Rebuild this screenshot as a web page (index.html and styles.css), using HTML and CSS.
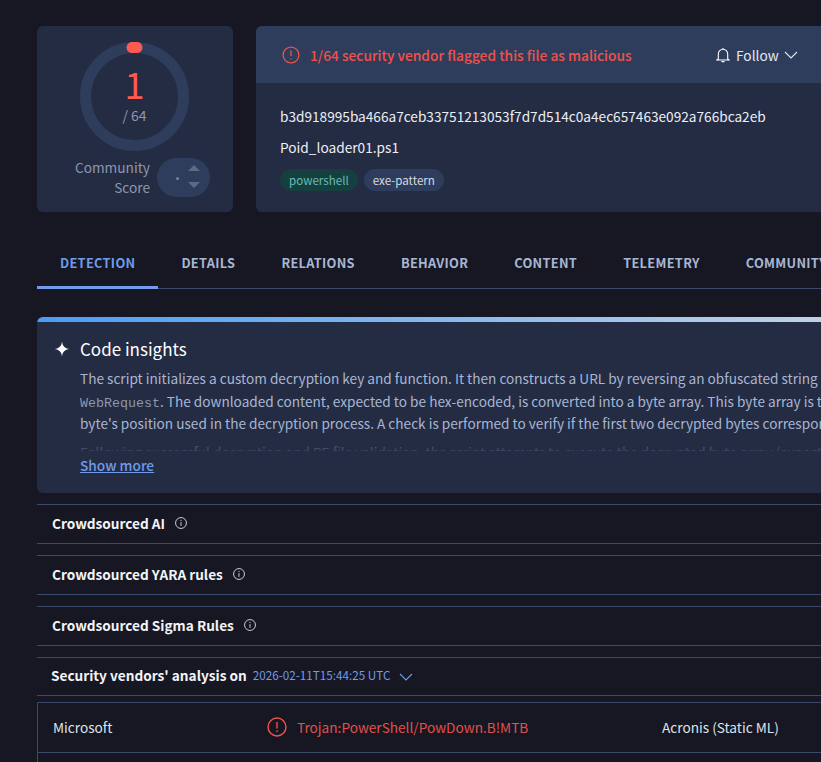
FILE: index.html
```html
<!DOCTYPE html>
<html lang="en">
<head>
<meta charset="utf-8">
<title>VirusTotal file report</title>
<link rel="stylesheet" href="styles.css">
</head>
<body>
<main class="page">
  <section class="top">
    <div class="score-card">
      <div class="ring">
        <svg class="ring-svg" width="109" height="109" viewBox="0 0 109 109">
          <circle cx="54.5" cy="54.5" r="49" fill="none" stroke="#2e3d5c" stroke-width="11"/>
          <path d="M52 5.6 Q54.5 5.4 57 5.6" fill="none" stroke="#ff5a50" stroke-width="11" stroke-linecap="round"/>
        </svg>
        <div class="ring-text"><div class="num">1</div><div class="den">/ 64</div></div>
      </div>
      <div class="community">
        <div class="community-label">Community<br>Score</div>
        <div class="vote">
          <span class="vote-dot"></span>
          <svg class="vote-arrows" width="14" height="26" viewBox="0 0 14 26"><path d="M7 0 L13 6 H1 Z M1 17 H13 L7 23 Z" fill="#5d6a84"/></svg>
        </div>
      </div>
    </div>
    <div class="info-card">
      <div class="info-head">
        <svg class="alert-icon" width="18" height="18" viewBox="0 0 18 18" fill="none" stroke="#f0524a" stroke-width="1.3"><circle cx="9" cy="9" r="7.9"/><path d="M9 4.6V10M9 12.4V13.4"/></svg>
        <span class="alert-text">1/64 security vendor flagged this file as malicious</span>
        <div class="follow">
          <svg width="14" height="16" viewBox="0 0 14 16" fill="none" stroke="#fff" stroke-width="1.1"><path d="M2.3 12V7a4.7 4.7 0 0 1 9.4 0v5l1.3 1H1Z M5.5 14.6h3"/><path d="M7 1v1.2"/></svg>
          <span>Follow</span>
          <svg class="follow-chevron" width="14" height="8" viewBox="0 0 14 8" fill="none" stroke="#dfe4ee" stroke-width="1.1"><path d="M1 1l6 6 6-6"/></svg>
        </div>
      </div>
      <div class="info-body">
        <div class="hash">b3d918995ba466a7ceb33751213053f7d7d514c0a4ec657463e092a766bca2eb</div>
        <div class="filename">Poid_loader01.ps1</div>
        <div class="tags"><span class="tag tag-green">powershell</span><span class="tag">exe-pattern</span></div>
      </div>
    </div>
  </section>

  <nav class="tabs">
    <a class="tab active">DETECTION</a>
    <a class="tab">DETAILS</a>
    <a class="tab">RELATIONS</a>
    <a class="tab">BEHAVIOR</a>
    <a class="tab">CONTENT</a>
    <a class="tab">TELEMETRY</a>
    <a class="tab">COMMUNITY</a>
  </nav>

  <section class="insights">
    <div class="insights-title">
      <svg width="16" height="16" viewBox="0 0 16 16"><path d="M8 0.5 C8.7 5.4 10.6 7.3 15.5 8 C10.6 8.7 8.7 10.6 8 15.5 C7.3 10.6 5.4 8.7 0.5 8 C5.4 7.3 7.3 5.4 8 0.5Z" fill="#fff"/></svg>
      <span>Code insights</span>
    </div>
    <div class="insights-body">
      <p>The script initializes a custom decryption key and function. It then constructs a URL by reversing an obfuscated string and downloads content from it using Invoke-</p>
      <p><code>WebRequest</code>. The downloaded content, expected to be hex-encoded, is converted into a byte array. This byte array is then decrypted using the key and each</p>
      <p>byte's position used in the decryption process. A check is performed to verify if the first two decrypted bytes correspond to the PE file header signature.</p>
      <p class="gap">Following successful decryption and PE file validation, the script attempts to execute the decrypted byte array (expected to be a .NET assembly)</p>
    </div>
    <a class="show-more">Show more</a>
  </section>

  <section class="rows">
    <div class="row">Crowdsourced AI <svg class="info" width="12" height="12" viewBox="0 0 13 13" fill="none" stroke="#d5d9e2" stroke-width="1"><circle cx="6.5" cy="6.5" r="5.9"/><path d="M6.5 5.6V9.6M6.5 3.2V4.4"/></svg></div>
    <div class="row">Crowdsourced YARA rules <svg class="info" width="12" height="12" viewBox="0 0 13 13" fill="none" stroke="#d5d9e2" stroke-width="1"><circle cx="6.5" cy="6.5" r="5.9"/><path d="M6.5 5.6V9.6M6.5 3.2V4.4"/></svg></div>
    <div class="row">Crowdsourced Sigma Rules <svg class="info" width="12" height="12" viewBox="0 0 13 13" fill="none" stroke="#d5d9e2" stroke-width="1"><circle cx="6.5" cy="6.5" r="5.9"/><path d="M6.5 5.6V9.6M6.5 3.2V4.4"/></svg></div>
    <div class="row vendors-head">
      <span>Security vendors' analysis on</span>
      <span class="date">2026-02-11T15:44:25 UTC</span>
      <svg width="14" height="8" viewBox="0 0 14 8" fill="none" stroke="#6f9bea" stroke-width="1.1"><path d="M1 1l6 6 6-6"/></svg>
    </div>
  </section>

  <section class="vendors">
    <div class="vendor-row">
      <div class="vendor-name">Microsoft</div>
      <div class="vendor-result">
        <svg width="20" height="20" viewBox="0 0 20 20" fill="none" stroke="#f0524a" stroke-width="1.4"><circle cx="10" cy="10" r="9"/><path d="M10 5V11.4M10 13.6V15"/></svg>
        <span>Trojan:PowerShell/PowDown.B!MTB</span>
      </div>
      <div class="vendor-name second">Acronis (Static ML)</div>
    </div>
    <div class="vendor-row"></div>
  </section>
</main>
</body>
</html>
```
FILE: styles.css
```css
* { box-sizing: border-box; }
html, body { margin: 0; height: 762px; overflow: hidden; background: #161723; }
body { width: 821px; font-family: "Noto Sans CJK SC", "Noto Sans CJK JP", "Liberation Sans", sans-serif; color: #fff; }
.page { width: 1100px; padding: 26px 0 0 37px; }

.top { display: flex; gap: 23px; }
.score-card { width: 196px; height: 186px; background: #242c44; border-radius: 6px; padding-top: 16px; display: flex; flex-direction: column; align-items: center; }
.ring { position: relative; width: 109px; height: 109px; margin-left: -1px; }
.ring-svg { display: block; }
.ring-text { position: absolute; inset: 0; display: flex; flex-direction: column; align-items: center; }
.num { font-size: 36px; line-height: 40px; margin-top: 21px; color: #ff5a50; }
.den { font-size: 14px; line-height: 20px; margin-top: 2px; color: #8d97ad; }
.community { display: flex; align-items: center; gap: 7px; margin-top: 6px; align-self: flex-end; padding-right: 23px; }
.community-label { font-size: 13.7px; line-height: 20px; color: #8d97ad; text-align: right; }
.vote { width: 53px; height: 39px; border-radius: 20px; background: #2e3d5c; display: flex; align-items: center; padding-left: 19px; gap: 8px; }
.vote-dot { width: 3px; height: 3px; border-radius: 50%; background: #77829a; margin-top: 2px; }
.vote-arrows { display: block; margin-top: 1px; }

.info-card { width: 800px; height: 186px; background: #242c44; border-radius: 6px; overflow: hidden; }
.info-head { height: 57px; background: #2e3d5c; display: flex; align-items: center; padding-left: 26px; }
.alert-icon { flex: none; }
.alert-text { font-size: 13.75px; font-weight: 500; color: #f0524a; margin-left: 10px; width: 406px; }
.follow { display: flex; align-items: center; gap: 6px; font-size: 13.7px; color: #e6e9f0; }
.follow-chevron { margin-left: -1px; }
.info-body { padding: 23px 0 0 24px; }
.hash { font-size: 13.65px; line-height: 20px; color: #eceff5; }
.filename { font-size: 13.7px; line-height: 20px; margin-top: 11px; color: #eceff5; }
.tags { display: flex; gap: 6px; margin-top: 12px; }
.tag { font-size: 11.6px; line-height: 22px; padding: 0 9px; border-radius: 11px; background: #2e3d5c; color: #d5d9e2; }
.tag-green { background: #15403f; color: #66bdb5; }

.tabs { display: flex; margin-top: 27px; width: 1063px; border-bottom: 1px solid #3b4a6b; height: 50px; }
.tab { padding: 0 23px; font-size: 12.8px; font-weight: 600; line-height: 47px; letter-spacing: 0.3px; color: #a9b6d3; height: 50px; }
.tab.active { color: #6f9bea; border-bottom: 3px solid #6f9bea; }

.insights { position: relative; margin-top: 28px; width: 1063px; height: 176px; background: #242c44; border-radius: 6px; overflow: hidden; padding: 5px 0 0 43px; }
.insights::before { content: ""; position: absolute; left: 0; top: 0; width: 100%; height: 5px; background: linear-gradient(90deg, #4a9df5, #e8e4e0); }
.insights-title { display: flex; align-items: center; gap: 10px; font-size: 17px; line-height: 24px; margin: 15px 0 0 -26px; }
.insights-body { height: 84px; margin-top: 6px; overflow: hidden; position: relative; font-size: 13.64px; line-height: 22.5px; color: #a9b6d3; white-space: nowrap; }
.insights-body::after { content: ""; position: absolute; left: 0; right: 0; bottom: 0; height: 24px; background: linear-gradient(180deg, rgba(36,44,68,0), rgba(36,44,68,0.85)); }
.insights-body p { margin: 0; height: 22.5px; }
.insights-body p.gap { margin-top: 6px; }
.insights-body code { font-family: "Liberation Mono", "DejaVu Sans Mono", monospace; font-size: 13.33px; line-height: 1; color: #8d97ad; }
.show-more { display: block; font-size: 13.7px; font-weight: 500; line-height: 20px; margin-top: 4px; color: #6f9bea; text-decoration: underline; }

.rows { margin-top: 11px; width: 1063px; }
.row { height: 40px; border-top: 1px solid #3b4a6b; border-bottom: 1px solid #3b4a6b; margin-bottom: 11px; padding-left: 15px; display: flex; align-items: center; font-size: 13.64px; font-weight: 700; color: #f2f4f8; line-height: 18px; padding-bottom: 3px; }
.info { margin-left: 10px; }
.vendors-head { height: 39px; margin-bottom: 6px; padding-left: 14px; gap: 6px; }
.date { font-size: 11.7px; font-weight: 400; color: #6f9bea; }
.vendors-head svg { margin-left: 3px; margin-top: 3px; }

.vendors { width: 1063px; border-left: 1px solid #3b4a6b; border-top: 1px solid #3b4a6b; }
.vendor-row { height: 50px; border-bottom: 1px solid #3b4a6b; display: flex; align-items: center; padding-left: 15px; padding-bottom: 2px; font-size: 13.65px; }
.vendor-name { width: 214px; color: #dfe3ea; }
.vendor-name.second { width: auto; }
.vendor-result { width: 395px; display: flex; align-items: center; gap: 10px; color: #e2504a; }
```
